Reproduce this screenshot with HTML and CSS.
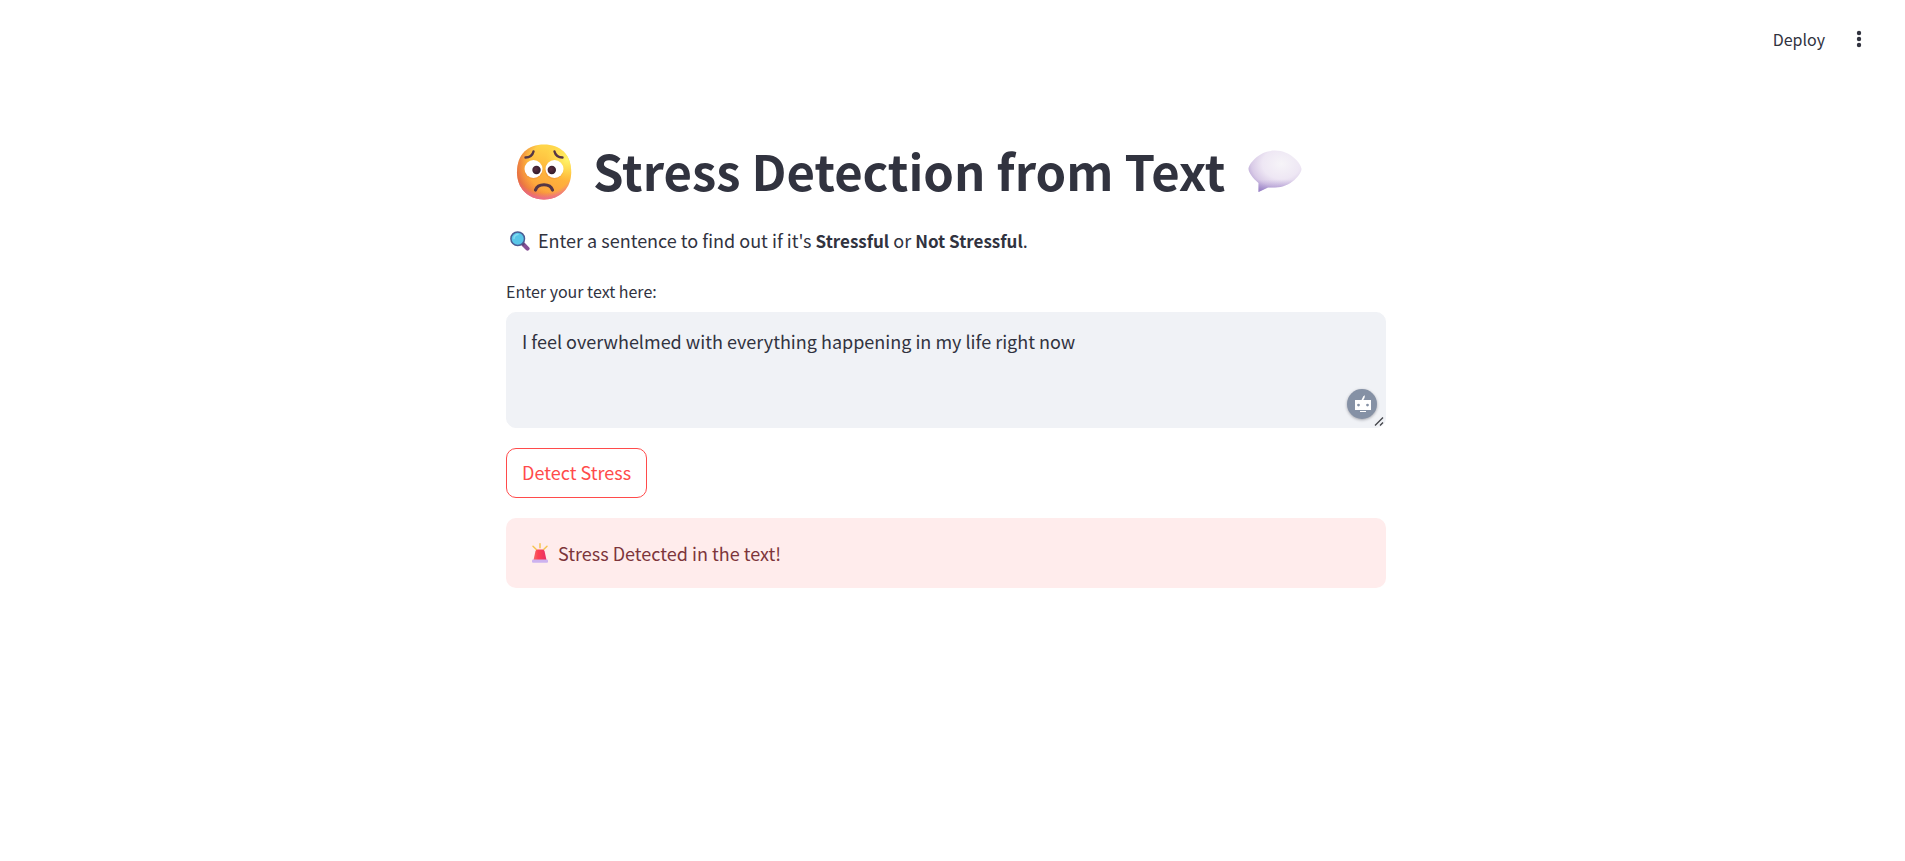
FILE: index.html
```html
<!DOCTYPE html>
<html lang="en">
<head>
<meta charset="utf-8">
<meta name="viewport" content="width=device-width, initial-scale=1">
<title>Stress Detection from Text</title>
<link rel="stylesheet" href="styles.css">
</head>
<body>
<header class="toolbar">
  <button class="deploy" type="button">Deploy</button>
  <button class="menu" type="button" aria-label="Main menu">
    <svg viewBox="0 0 20 20" aria-hidden="true"><circle cx="10" cy="4" r="2.2"/><circle cx="10" cy="10" r="2.2"/><circle cx="10" cy="16" r="2.2"/></svg>
  </button>
</header>
<main class="content">
  <h1 class="title">
    <svg class="title-icon" viewBox="0 0 56 56" aria-hidden="true">
      <defs>
        <linearGradient id="face" x1="0.7" y1="0.1" x2="0.4" y2="1"><stop offset="0" stop-color="#ffd54a"/><stop offset="0.45" stop-color="#ffb53b"/><stop offset="1" stop-color="#fb9c3e"/></linearGradient>
        <radialGradient id="faceShade" cx="0.66" cy="0.4" r="0.7"><stop offset="0.65" stop-color="#e8663d" stop-opacity="0"/><stop offset="1" stop-color="#dc5648" stop-opacity="0.8"/></radialGradient>
        <radialGradient id="faceGlow" cx="0.93" cy="0.27" r="0.4"><stop offset="0" stop-color="#fff56b"/><stop offset="1" stop-color="#ffe14f" stop-opacity="0"/></radialGradient>
        <radialGradient id="faceRose" cx="0.5" cy="0.3" r="0.72"><stop offset="0.8" stop-color="#ee6da0" stop-opacity="0"/><stop offset="1" stop-color="#ea66ac" stop-opacity="0.9"/></radialGradient>
        <radialGradient id="pupil" cx="0.4" cy="0.4" r="0.6"><stop offset="0" stop-color="#5a2d40"/><stop offset="1" stop-color="#331c2b"/></radialGradient>
      </defs>
      <path d="M28 .5C44 .5 55.200 10 55.200 28.500 55.200 44 44 55.500 28 55.500S1 44 1 28.500C1 10 12 .5 28 .5Z" fill="url(#face)"/>
      <path d="M28 .5C44 .5 55.200 10 55.200 28.500 55.200 44 44 55.500 28 55.500S1 44 1 28.500C1 10 12 .5 28 .5Z" fill="url(#faceShade)"/>
      <path d="M28 .5C44 .5 55.200 10 55.200 28.500 55.200 44 44 55.500 28 55.500S1 44 1 28.500C1 10 12 .5 28 .5Z" fill="url(#faceRose)"/>
      <path d="M28 .5C44 .5 55.200 10 55.200 28.500 55.200 44 44 55.500 28 55.500S1 44 1 28.500C1 10 12 .5 28 .5Z" fill="url(#faceGlow)"/>
      <circle cx="17.500" cy="26" r="9.200" fill="#e5873b" opacity=".35"/><circle cx="38" cy="26" r="9.200" fill="#e5873b" opacity=".35"/>
      <circle cx="17.500" cy="25" r="9" fill="#fff"/><circle cx="38.500" cy="25" r="9" fill="#fff"/>
      <circle cx="20.500" cy="26" r="4.200" fill="url(#pupil)"/><circle cx="35.800" cy="26" r="4.200" fill="url(#pupil)"/>
      <path d="M9.500 13.500Q16 13.500 17.500 7.500M46.500 13.500Q40 13.500 38.500 7.500" fill="none" stroke="#553646" stroke-width="2.400" stroke-linecap="round"/>
      <path d="M19.500 46C22 39 34 39 36.500 46" fill="none" stroke="#553646" stroke-width="3.200" stroke-linecap="round"/>
    </svg>
    <span class="title-text">Stress Detection from Text</span>
    <svg class="title-icon" viewBox="0 0 56 56" aria-hidden="true">
      <defs>
        <radialGradient id="bubble" cx="0.62" cy="0.32" r="0.75"><stop offset="0" stop-color="#f6f4f8"/><stop offset="0.48" stop-color="#eee7f4"/><stop offset="0.75" stop-color="#d9cbe7"/><stop offset="1" stop-color="#aa95ce"/></radialGradient>
        <linearGradient id="tail" x1="0" y1="0" x2="0" y2="1"><stop offset="0.7" stop-color="#a58cce" stop-opacity="0"/><stop offset="1" stop-color="#8f77c2" stop-opacity="0.7"/></linearGradient>
      </defs>
      <path d="M28 6.500C44 6.500 54.500 20 54.500 25S44 43.500 28 43.500H21L11.500 48V39C5.500 34 1.500 28 1.500 25 1.500 20 12 6.500 28 6.500Z" fill="url(#bubble)"/>
      <path d="M28 6.500C44 6.500 54.500 20 54.500 25S44 43.500 28 43.500H21L11.500 48V39C5.500 34 1.500 28 1.500 25 1.500 20 12 6.500 28 6.500Z" fill="url(#tail)"/>
    </svg>
  </h1>
  <p class="intro">
    <svg class="inline-icon" viewBox="0 0 20 20" aria-hidden="true">
      <path d="M12.500 12.500 17.500 17.600" stroke="#875096" stroke-width="4.200" stroke-linecap="round"/>
      <path d="m11.600 11.600 2.400 2.400" stroke="#5b4776" stroke-width="2.600"/>
      <circle cx="7.700" cy="7.700" r="6.800" fill="#58c6e8" stroke="#4a5d94" stroke-width="1.500"/>
      <path d="M4 7.500A3.900 3.900 0 0 1 8 3.500" fill="none" stroke="#83dcf2" stroke-width="1.500" stroke-linecap="round"/>
    </svg>
    <span class="intro-text">Enter a sentence to find out if it's <strong>Stressful</strong> or <strong>Not Stressful</strong>.</span>
  </p>
  <form class="form">
    <label class="label" for="message">Enter your text here:</label>
    <div class="field">
      <textarea class="textarea" id="message" spellcheck="false">I feel overwhelmed with everything happening in my life right now</textarea>
      <svg class="grip" viewBox="0 0 14 14" aria-hidden="true"><path d="M3 11.500 11 3.500M8 11.500 11 8.500" fill="none" stroke="#45464b" stroke-width="1.400"/></svg>
      <button class="assistant" type="button" aria-label="Writing assistant">
        <svg viewBox="0 0 30 30" aria-hidden="true"><path fill="#fff" fill-rule="evenodd" d="M14.500 11 16.300 7.200 18 6.200 17.500 9 16.300 11H24V21H8V11ZM11.500 14.700a1.400 1.400 0 1 0 0 2.800 1.400 1.400 0 0 0 0-2.800ZM20.500 14.700a1.400 1.400 0 1 0 0 2.800 1.400 1.400 0 0 0 0-2.800ZM13 22h6v1h-6Z"/></svg>
      </button>
    </div>
    <button class="submit" type="button">Detect Stress</button>
  </form>
  <div class="alert" role="alert">
    <svg class="inline-icon" viewBox="0 0 20 20" aria-hidden="true">
      <defs><linearGradient id="lamp"><stop stop-color="#f06c6b"/><stop offset=".35" stop-color="#ff4052"/><stop offset="1" stop-color="#e82d67"/></linearGradient></defs>
      <path d="M10 .8v4M3 3.200l3.600 3.500M17 3.200l-3.600 3.500" stroke="#f5c451" stroke-width="1.500" stroke-linecap="round"/>
      <path d="M7.500 6.500h5q1.500 0 2 1.500L16.500 17h-13L5.500 8Q6 6.500 7.500 6.500Z" fill="url(#lamp)"/>
      <rect x="2" y="16.500" width="16" height="3.300" rx="1" fill="#cdb2ef"/>
    </svg>
    <span>Stress Detected in the text!</span>
  </div>
</main>
</body>
</html>
```
FILE: styles.css
```css
* { box-sizing: border-box; }

body {
  margin: 0;
  background: #fff;
  color: #31333f;
  font-family: "Noto Sans CJK SC", "Noto Sans", sans-serif;
  font-size: 18px;
  line-height: 32px;
}

button, textarea {
  font: inherit;
  color: inherit;
}

button {
  padding: 0;
  border: 0;
  background: none;
  cursor: pointer;
}

.toolbar {
  display: flex;
  justify-content: flex-end;
  align-items: center;
  gap: 24px;
  height: 78px;
  padding-right: 36px;
}

.deploy { font-size: 16px; }

.menu {
  display: flex;
  width: 20px;
  height: 20px;
}

.menu svg { width: 20px; fill: #31333f; }

.content {
  max-width: 893px;
  margin: 0 auto;
  padding: 61px 13px 60px 0;
}

.title {
  display: flex;
  align-items: center;
  gap: 21px;
  margin: 0 0 20px;
  padding-left: 10px;
  font-size: 49px;
  font-weight: 700;
  line-height: 62px;
}

.title-text { padding-bottom: 4px; }

.title-icon {
  flex: none;
  width: 56px;
  height: 56px;
}

.intro {
  display: flex;
  align-items: center;
  gap: 8px;
  height: 32px;
  margin: 0 0 20px;
  padding-left: 4px;
}

.intro-text { padding-bottom: 2px; }

.intro strong {
  font-size: 17px;
  font-weight: 700;
}

.inline-icon {
  flex: none;
  width: 20px;
  height: 20px;
}

.form {
  display: flex;
  flex-direction: column;
  align-items: flex-start;
}

.label {
  padding-bottom: 7px;
  font-size: 16px;
  line-height: 28px;
}

.field {
  position: relative;
  display: flex;
  width: 100%;
  margin-bottom: 20px;
}

.textarea {
  width: 100%;
  height: 116px;
  padding: 14px 15px;
  border: 1px solid #f0f2f6;
  border-radius: 10px;
  background: #f0f2f6;
  line-height: 28px;
  resize: vertical;
  outline: 0;
}

.textarea::-webkit-resizer { background: transparent; }

.grip {
  position: absolute;
  right: 0;
  bottom: 0;
  width: 14px;
  height: 14px;
  pointer-events: none;
}

.assistant {
  position: absolute;
  right: 9px;
  bottom: 9px;
  width: 30px;
  height: 30px;
  border-radius: 50%;
  background: #8591a5;
  box-shadow: 0 1px 3px rgba(49, 51, 63, 0.4);
}

.assistant svg { display: block; }

.submit {
  height: 50px;
  padding: 0 15px 2px;
  border: 1px solid #ff4b4b;
  border-radius: 10px;
  color: #ff4b4b;
}

.alert {
  display: flex;
  align-items: center;
  gap: 8px;
  margin-top: 20px;
  padding: 19px 24px;
  border-radius: 10px;
  background: #ffecec;
  color: #7d353b;
}
```
